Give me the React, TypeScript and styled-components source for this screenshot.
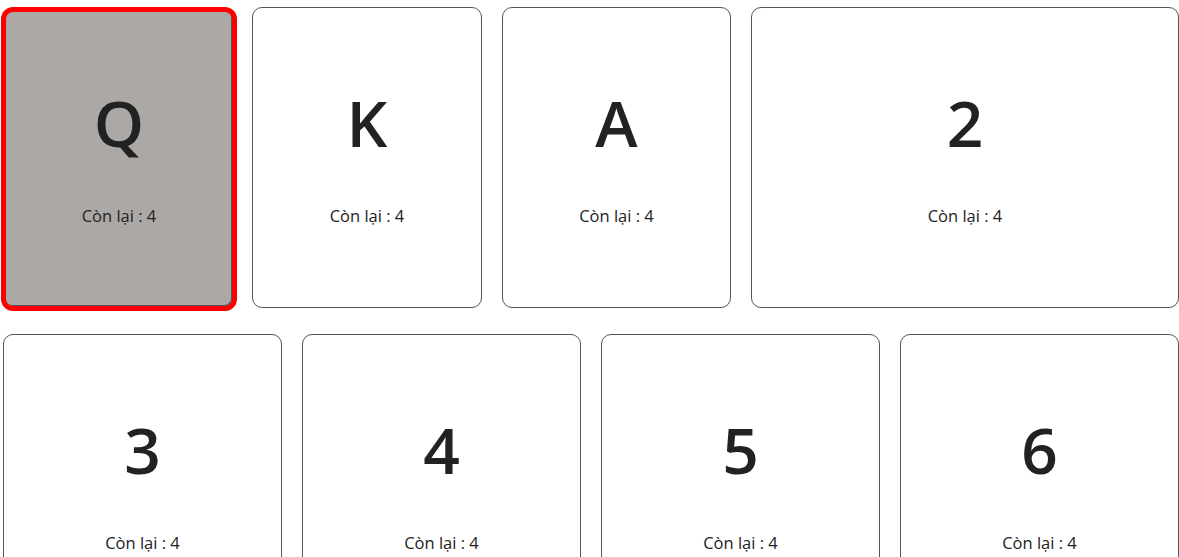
import styled, { createGlobalStyle } from 'styled-components';

interface Rank {
  label: string;
  left: number;
}

const firstRow: Rank[] = [
  { label: 'Q', left: 4 },
  { label: 'K', left: 4 },
  { label: 'A', left: 4 },
  { label: '2', left: 4 },
];

const secondRow: Rank[] = [
  { label: '3', left: 4 },
  { label: '4', left: 4 },
  { label: '5', left: 4 },
  { label: '6', left: 4 },
];

const GlobalStyle = createGlobalStyle`
  html, body {
    margin: 0;
    padding: 0;
    background: #fff;
    overflow: hidden;
  }
  body {
    font-family: "Open Sans", "Noto Sans", sans-serif;
    color: #222;
  }
`;

const selectedLabel = 'Q';

const App = () => {
  return (
    <>
      <GlobalStyle />
      <Board>
        <TopRow>
          {firstRow.map((rank) => (
            <Card key={rank.label} $selected={rank.label === selectedLabel}>
              <Value>{rank.label}</Value>
              <Remaining>Còn lại : {rank.left}</Remaining>
            </Card>
          ))}
        </TopRow>
        <BottomRow>
          {secondRow.map((rank) => (
            <Card key={rank.label}>
              <Value>{rank.label}</Value>
              <Remaining>Còn lại : {rank.left}</Remaining>
            </Card>
          ))}
        </BottomRow>
      </Board>
    </>
  );
};

export default App;

const Board = styled.div`
  display: flex;
  flex-direction: column;
  gap: 23px;
  padding-top: 7px;
  width: 1179px;
`;

const TopRow = styled.div`
  display: grid;
  grid-template-columns: 231px 230px 229px 1fr;
  column-gap: 20px;
  padding-left: 1px;
  align-items: start;

  & > :first-child {
    margin-right: -5px;
  }
`;

const BottomRow = styled.div`
  display: grid;
  grid-template-columns: repeat(4, 1fr);
  column-gap: 20px;
  padding-left: 3px;
`;

const Card = styled.div<{ $selected?: boolean }>`
  box-sizing: border-box;
  height: ${(p) => (p.$selected ? '304px' : '301px')};
  border: ${(p) => (p.$selected ? '5px solid #ff0000' : '1px solid #555')};
  border-radius: ${(p) => (p.$selected ? '12px' : '10px')};
  background: ${(p) => (p.$selected ? '#aca8a6' : '#fff')};
  box-shadow: ${(p) => (p.$selected ? 'inset -1px -1px 0 #555' : 'none')};
  display: flex;
  flex-direction: column;
  align-items: center;
  padding-top: ${(p) => (p.$selected ? '79px' : '83px')};
`;

const Value = styled.div`
  font-size: 64px;
  font-weight: 600;
  line-height: 1;
  color: #222;
`;

const Remaining = styled.div`
  margin-top: 51px;
  font-size: 16.5px;
  line-height: 20px;
  color: #222;
`;
